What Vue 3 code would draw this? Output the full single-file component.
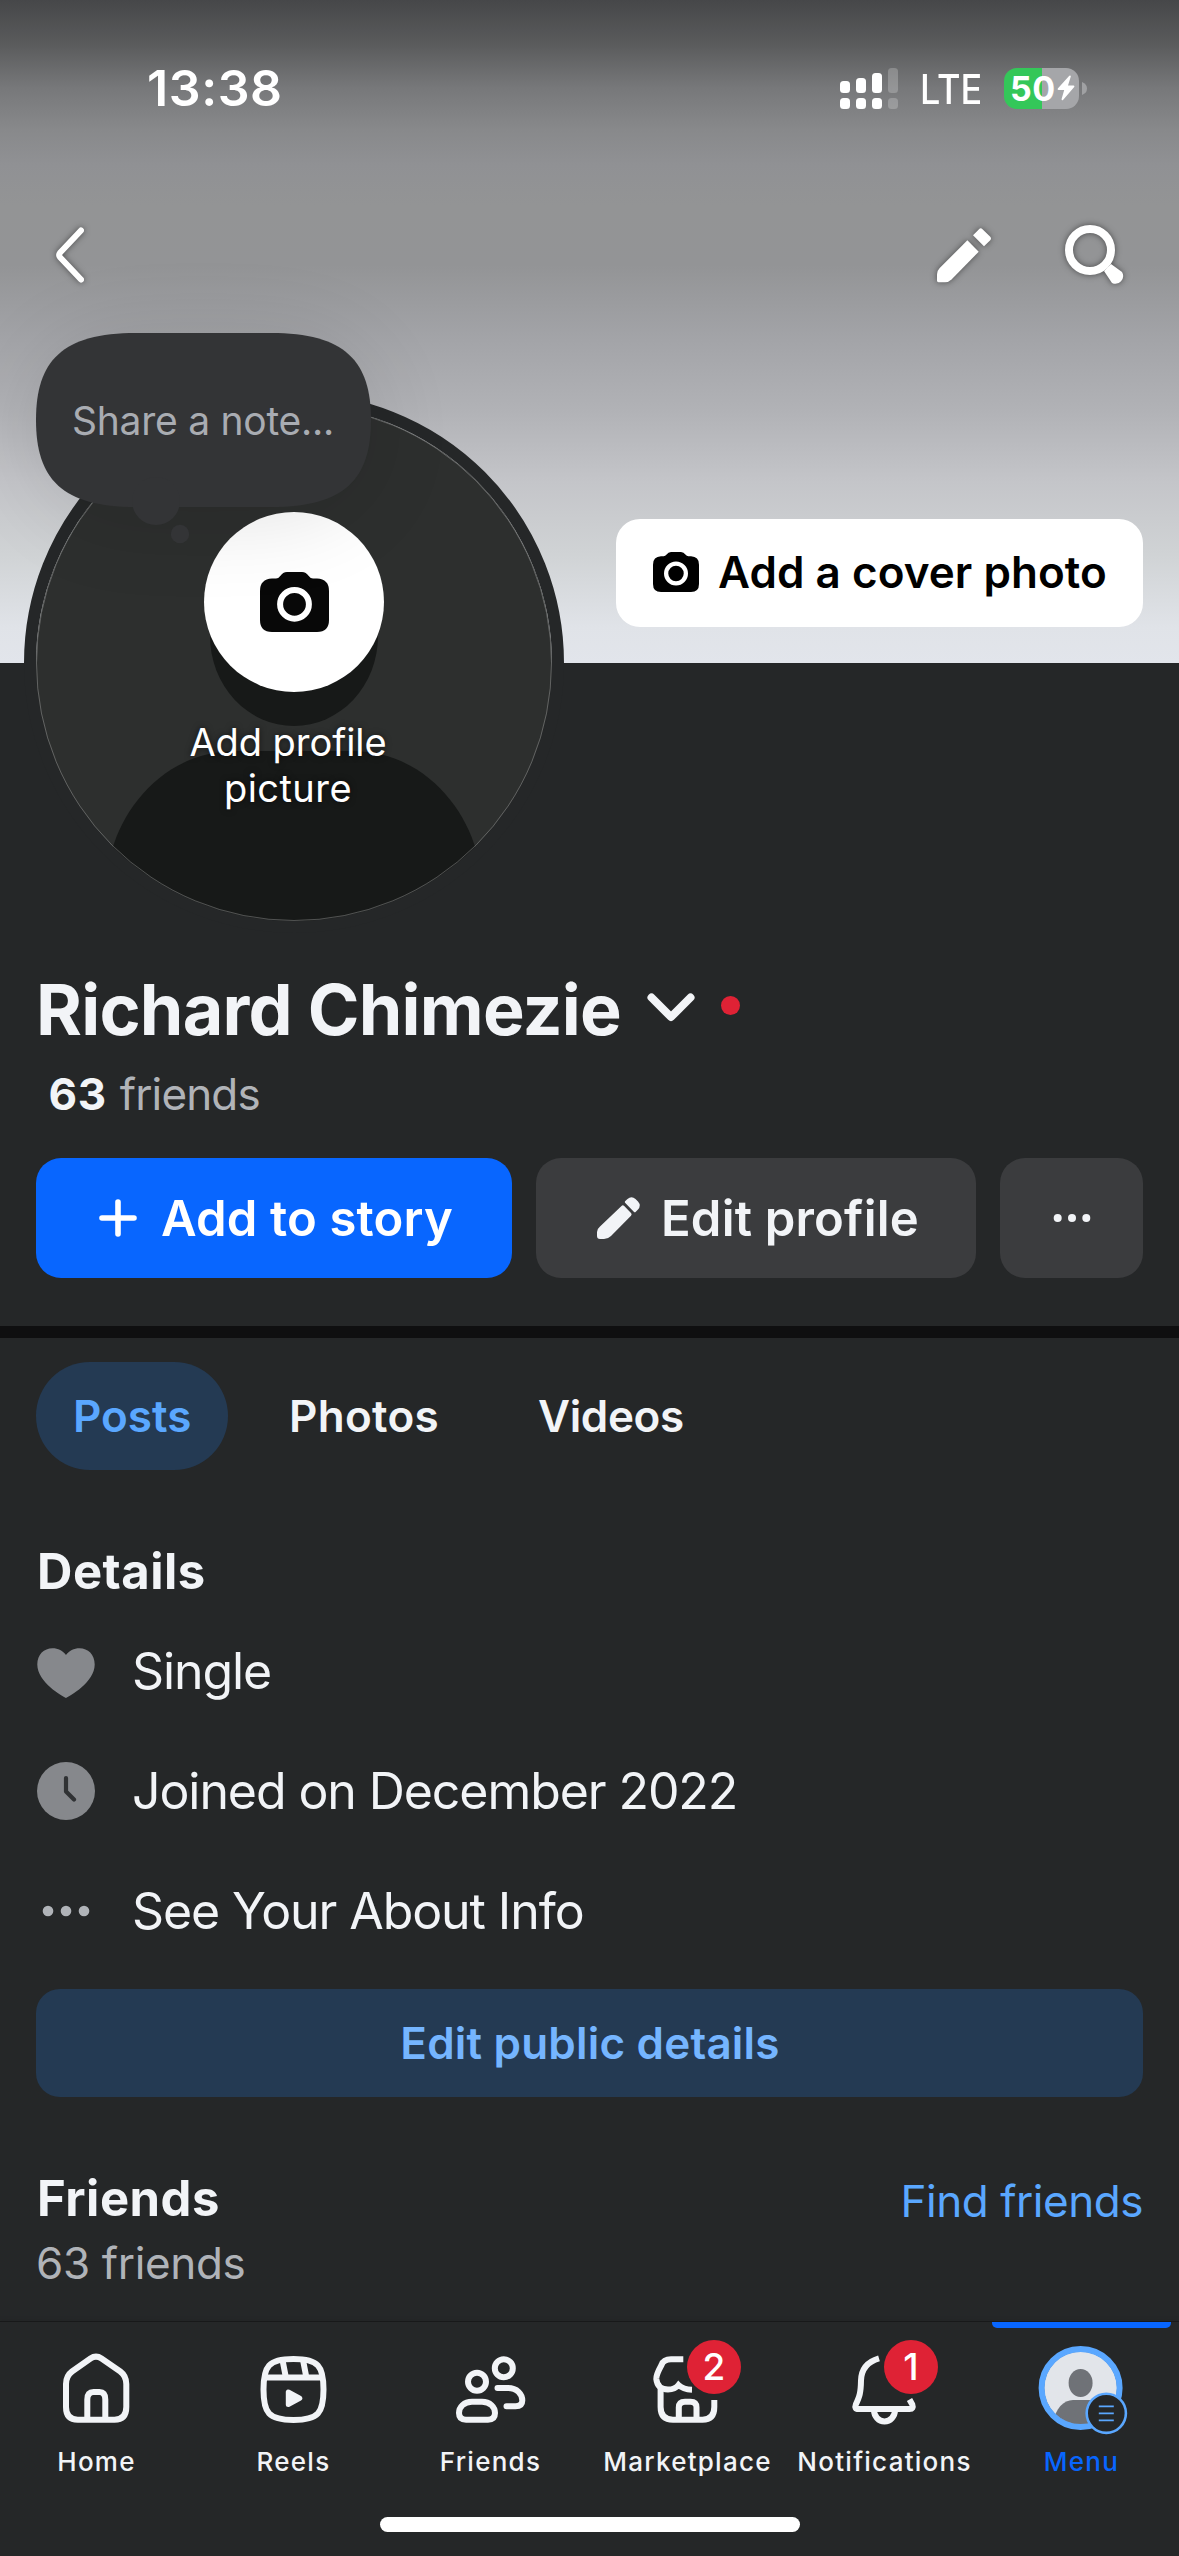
<script setup>
const signal = [
  { height: 12, dim: false },
  { height: 15, dim: false },
  { height: 20, dim: false },
  { height: 25, dim: true }
]
</script>

<template>
  <main class="screen">
    <header class="cover">
      <div class="status">
        <span class="time">13:38</span>
        <div class="signal">
          <span v-for="(bar, i) in signal" :key="i" class="signal-col" :class="{ dim: bar.dim }">
            <i :style="{ height: bar.height + 'px' }"></i>
            <i class="base"></i>
          </span>
        </div>
        <span class="network">LTE</span>
        <div class="battery">
          <span class="level">50</span>
          <svg class="bolt" width="18" height="26" viewBox="0 0 18 26">
            <path d="M12.3 .8 L.8 13.6 Q0 15 1.6 15 H7.2 L4.6 24 Q4.6 25.8 6 24.9 L17.2 12 Q18 10.6 16.6 10.5 H11 L13.8 1.6 Q13.7 0 12.3 .8Z" fill="#fff" />
          </svg>
        </div>
        <svg class="nub" width="5" height="13" viewBox="0 0 5 13"><path d="M0 0 Q5 2 5 6.5 Q5 11 0 13Z" fill="#a0a1a3" /></svg>
      </div>

      <div class="toolbar">
        <svg class="back" width="30" height="56" viewBox="0 0 30 56">
          <path d="M26 3.5 L5 25.8 Q3.3 28 5 30.2 L26 52.5" fill="none" stroke="#fff" stroke-width="6" stroke-linecap="round" stroke-linejoin="round" />
        </svg>
        <svg class="tool pencil" width="54" height="55" viewBox="0 0 54 55">
          <g fill="#fff">
            <path d="M30.4 12.3 L41.7 23.7 L14.5 51.5 Q11.7 54.3 8 54.3 H1.5 Q0 54.3 0 52.5 V46.5 Q0 42.7 2.7 40Z" />
            <path d="M36 7.3 L42 1.2 Q43.7 -.5 45.5 1.2 L53 8.5 Q55 10.7 53 12.5 L47 18.3Z" />
          </g>
        </svg>
        <svg class="tool" width="60" height="60" viewBox="0 0 60 60">
          <circle cx="25" cy="25" r="21" fill="none" stroke="#fff" stroke-width="8" />
          <path d="M46 39 L57 47 A7.8 7.8 0 0 1 47 58 L39 46Z" fill="#fff" />
        </svg>
      </div>

      <button class="cover-btn">
        <svg width="46" height="40" viewBox="0 0 69 60">
          <path d="M12 6.5 H16 Q18.5 6.5 20 4.3 Q23 0 27 0 H42 Q46 0 49 4.3 Q50.5 6.5 53 6.5 H57 Q69 7 69 19 V48 Q69 60 57 60 H12 Q0 60 0 48 V19 Q0 7 12 6.5Z" fill="#000" />
          <circle cx="34.5" cy="32.3" r="14.8" fill="none" stroke="#fff" stroke-width="6.4" />
        </svg>
        <span>Add a cover photo</span>
      </button>

      <div class="avatar">
        <svg class="person" width="516" height="516" viewBox="0 0 516 516">
          <defs>
            <clipPath id="face"><circle cx="258" cy="258" r="258" /></clipPath>
          </defs>
          <g clip-path="url(#face)">
            <rect width="516" height="516" fill="#2d2f2e" />
            <ellipse cx="258" cy="231" rx="84" ry="90" fill="#171918" />
            <path d="M76 445 C90 396 134 346 200 346 H316 C382 346 426 396 440 445 V516 H76Z" fill="#171918" />
          </g>
          <circle cx="258" cy="258" r="257.5" fill="none" stroke="#fff" stroke-opacity=".25" />
        </svg>
        <div class="camera">
          <svg width="69" height="60" viewBox="0 0 69 60">
            <path d="M12 6.5 H16 Q18.5 6.5 20 4.3 Q23 0 27 0 H42 Q46 0 49 4.3 Q50.5 6.5 53 6.5 H57 Q69 7 69 19 V48 Q69 60 57 60 H12 Q0 60 0 48 V19 Q0 7 12 6.5Z" fill="#080808" />
            <circle cx="34.5" cy="32.3" r="14.4" fill="none" stroke="#fff" stroke-width="6" />
          </svg>
        </div>
        <p class="avatar-label"><span class="l1">Add profile</span><br /><span class="l2">picture</span></p>
      </div>

      <div class="note">
        <svg class="note-shape" width="335" height="212" viewBox="0 0 335 212">
          <g fill="#333436">
            <path d="M0 87 C0 28 26 0 100 0 H235 C309 0 335 28 335 87 C335 146 309 174 235 174 H100 C26 174 0 146 0 87Z" />
            <circle cx="120" cy="168" r="24" />
            <circle cx="144" cy="201" r="9.2" />
          </g>
        </svg>
        <span class="note-text">Share a note...</span>
      </div>
    </header>

    <section class="profile">
      <div class="name-row">
        <h1>Richard Chimezie</h1>
        <svg class="chevron" width="48" height="30" viewBox="0 0 48 30">
          <path d="M4.5 4.5 L24 24 L43.5 4.5" fill="none" stroke="#f2f4f7" stroke-width="8" stroke-linecap="round" stroke-linejoin="round" />
        </svg>
        <i class="alert"></i>
      </div>
      <p class="friend-count"><b>63</b><span>friends</span></p>
      <div class="actions">
        <button class="action story">
          <svg width="38" height="38" viewBox="0 0 38 38">
            <path d="M19 3 V35 M3 19 H35" stroke="#fff" stroke-width="5.6" stroke-linecap="round" />
          </svg>
          <span>Add to story</span>
        </button>
        <button class="action edit">
          <svg width="43" height="42" viewBox="0 0 43 42">
            <g fill="#f2f4f7">
              <path d="M24.5 9 Q25.8 7.6 27.2 9 L34 16 Q35.3 17.3 34 18.7 L14 39 Q11 42 7 42 H3 Q0 42 0 39 V35 Q0 32 3 29.5Z" />
              <path d="M28.3 6 Q27.3 5 28.3 4 L30.5 2 Q34.5 -1.5 38.5 2 L41 4.5 Q44.5 8.5 41 12.5 L38.8 14.8 Q37.8 15.8 36.8 14.8Z" />
            </g>
          </svg>
          <span>Edit profile</span>
        </button>
        <button class="action more">
          <svg width="38" height="10" viewBox="0 0 38 10" fill="#f2f4f7">
            <circle cx="4.7" cy="5" r="4" /><circle cx="19" cy="5" r="4" /><circle cx="33.3" cy="5" r="4" />
          </svg>
        </button>
      </div>
    </section>

    <section class="feed">
      <nav class="tabs">
        <span class="tab active">Posts</span>
        <span class="tab photos">Photos</span>
        <span class="tab videos">Videos</span>
      </nav>

      <h2 class="details-title">Details</h2>
      <ul class="details">
        <li>
          <svg width="58" height="58" viewBox="0 0 58 58">
            <path d="M29 56 C25.5 54.5 .3 40 .3 22.5 C.3 12.5 7 6.3 15.5 6.3 C21 6.3 26 9 29 13 C32 9 37 6.3 42.5 6.3 C51 6.3 57.7 12.5 57.7 22.5 C57.7 40 32.5 54.5 29 56Z" fill="#86888c" />
          </svg>
          <span>Single</span>
        </li>
        <li>
          <svg width="58" height="58" viewBox="0 0 58 58">
            <circle cx="29" cy="29" r="29" fill="#86888c" />
            <path d="M29 16 V29.5 L37 37.5" fill="none" stroke="#303234" stroke-width="4.2" stroke-linecap="round" stroke-linejoin="round" />
          </svg>
          <span>Joined on December 2022</span>
        </li>
        <li>
          <svg width="58" height="58" viewBox="0 0 58 58" fill="#b0b3b8">
            <circle cx="11" cy="29" r="5.3" /><circle cx="29" cy="29" r="5.3" /><circle cx="47" cy="29" r="5.3" />
          </svg>
          <span>See Your About Info</span>
        </li>
      </ul>
      <button class="edit-details">Edit public details</button>

      <div class="friends-head">
        <h2>Friends</h2>
        <a>Find friends</a>
      </div>
      <p class="friends-sub">63 friends</p>
    </section>

    <footer class="bottom">
      <nav class="bar">
        <div class="item">
          <svg class="icon" viewBox="0 0 84 84">
            <path d="M12 38 Q12 30 18 25.5 L36.5 12.5 Q42 8.8 47.5 12.5 L66.3 25.5 Q72.3 30 72.3 38 V61 Q72.3 73.7 60.5 73.7 H23.8 Q12 73.7 12 61Z" />
            <path d="M33.3 73 V53.5 Q33.3 46 39.5 46 H45.5 Q51.3 46 51.3 53.5 V73" />
          </svg>
          <span>Home</span>
        </div>
        <div class="item">
          <svg class="icon" viewBox="0 0 84 84">
            <path d="M12.5 43.5 C12.5 20 17.5 13 42.5 13 C67.500 13 72.5 20 72.5 43.5 C72.5 67 67.5 74 42.5 74 C17.5 74 12.5 67 12.5 43.5Z" />
            <path d="M13 31.5 H72 M31.5 14 L34.8 31 M52 14 L55.3 31" />
            <path d="M37.3 46 V58.6 L48.8 52.3Z" fill="#f2f4f7" stroke-width="5" stroke-linejoin="round" />
          </svg>
          <span>Reels</span>
        </div>
        <div class="item">
          <svg class="icon" viewBox="0 0 84 84" stroke-linecap="round">
            <circle cx="55.8" cy="22.3" r="9" />
            <circle cx="29" cy="35.7" r="9" />
            <path d="M24 55.7 H34 C42 55.7 47 61 47 67 Q47 73.7 40 73.7 H18 Q11 73.7 11 67 C11 61 16 55.7 24 55.7Z" />
            <path d="M49.500 42 H60 C69 42 74.3 48 74.3 54.5 Q74.3 60.3 67.5 60.3 H58.5" />
          </svg>
          <span>Friends</span>
        </div>
        <div class="item">
          <div class="icon-wrap">
            <svg class="icon" viewBox="0 0 84 84">
              <path d="M38.3 13.3 H26 Q18.5 13.3 16.5 19 Q11 29 11.3 33 Q12.5 43.5 23 43.5 Q30 43.5 33.500 39 Q38 43.5 47 43.7" />
              <path d="M15.6 41 V61 Q15.6 73.7 28 73.7 H57.5 Q69.3 73.7 69.3 61 V54" />
              <path d="M33.8 73 V61.5 Q33.8 55.7 40 55.7 H45.5 Q51.5 55.7 51.5 61.5 V73" />
            </svg>
            <span class="badge">2</span>
          </div>
          <span>Marketplace</span>
        </div>
        <div class="item">
          <div class="icon-wrap">
            <svg class="icon" viewBox="0 0 84 84">
              <path d="M37 12.3 C26 15.5 19.3 23 19 34.5 C18.8 47 17.5 50.5 13.8 58.5 Q12 63 16.5 63 H67.5 Q72 63 70.3 58.5 L67.5 53.5" />
              <path d="M32 64 A10.5 11.5 0 0 0 53 64" />
            </svg>
            <span class="badge">1</span>
          </div>
          <span>Notifications</span>
        </div>
        <div class="item active">
          <svg class="icon account" viewBox="0 0 84 84">
            <defs>
              <clipPath id="me"><circle cx="41.6" cy="42" r="36.5" /></clipPath>
            </defs>
            <g clip-path="url(#me)" stroke="none">
              <rect width="84" height="84" fill="#e2e5ea" />
              <ellipse cx="41.6" cy="37" rx="12" ry="14" fill="#6f7277" />
              <path d="M14 84 V78 C16 62 25 54 34 54 H50 C59 54 68 62 70 78 V84Z" fill="#6f7277" />
            </g>
            <circle cx="41.6" cy="42" r="39" stroke="#5aa7ff" stroke-width="6" />
            <circle cx="67.3" cy="67.3" r="19.6" fill="#252728" stroke="#5aa7ff" stroke-width="2.6" />
            <path d="M59.8 60.4 H74.8 M59.8 67.4 H74.8 M59.8 74.4 H74.8" stroke="#5aa7ff" stroke-width="1.6" />
          </svg>
          <span>Menu</span>
        </div>
      </nav>
      <i class="home-indicator"></i>
    </footer>
  </main>
</template>

<style>
body {
  background: #252728;
}
</style>

<style scoped>
* {
  box-sizing: border-box;
  margin: 0;
  padding: 0;
}
.screen {
  width: 1179px;
  height: 2556px;
  display: flex;
  flex-direction: column;
  overflow: hidden;
  background: #252728;
  color: #f2f4f7;
  font-family: "Inter", "Liberation Sans", sans-serif;
}
svg {
  display: block;
  flex: none;
}
button {
  border: 0;
  font: inherit;
  color: inherit;
  display: flex;
  align-items: center;
}

/* Cover */
.cover {
  position: relative;
  flex: none;
  height: 663px;
  background: linear-gradient(
    180deg,
    #464749 0,
    #5a5b5c 44px,
    #77787a 88px,
    #88898b 130px,
    #909194 165px,
    #939495 205px,
    #939496 265px,
    #a3a4a8 340px,
    #b1b2b6 410px,
    #c4c5c9 482px,
    #d0d3d5 555px,
    #e0e3e8 627px,
    #e2e5eb 663px
  );
}
.status {
  height: 176px;
  padding: 0 92px 0 147px;
  display: flex;
  align-items: center;
}
.time {
  flex: 1;
  font-size: 50px;
  font-weight: 600;
  letter-spacing: 0.6px;
  color: #fff;
}
.signal {
  display: flex;
  gap: 6px;
  align-items: flex-end;
  height: 41px;
}
.signal-col {
  display: flex;
  flex-direction: column;
  gap: 5px;
}
.signal-col i {
  width: 10px;
  border-radius: 3.5px;
  background: #fff;
}
.signal-col .base {
  height: 11px;
}
.signal-col.dim i {
  background: rgba(255, 255, 255, 0.22);
}
.network {
  width: 57px;
  margin: 3px 27px 0 22px;
  font-size: 40.5px;
  font-weight: 500;
  color: #fff;
  transform: scaleX(0.89);
  transform-origin: left;
}
.battery {
  width: 75px;
  height: 41px;
  border-radius: 13px;
  display: flex;
  align-items: center;
  padding-left: 6px;
  background: linear-gradient(90deg, #34c759 38px, #a5a6a9 38px);
}
.level {
  width: 47px;
  font-size: 34px;
  font-weight: 700;
  letter-spacing: 0.4px;
  color: #fff;
}
.nub {
  margin-left: 3px;
}
.toolbar {
  height: 158px;
  display: flex;
  align-items: center;
  padding: 0 54px 0 55px;
}
.toolbar svg {
  overflow: visible;
  filter: drop-shadow(0 0 3px rgba(0, 0, 0, 0.5));
}
.pencil {
  margin-left: auto;
  margin-right: 74px;
}
.cover-btn {
  width: 527px;
  height: 108px;
  margin: 185px 36px 0 auto;
  padding: 0 0 2px 37px;
  gap: 19px;
  border-radius: 24px;
  background: #fff;
  color: #000;
  font-size: 44px;
  font-weight: 600;
  letter-spacing: 0.05px;
}

/* Avatar overlapping the cover edge */
.avatar {
  position: absolute;
  left: 24px;
  top: 393px;
  width: 540px;
  height: 540px;
  border-radius: 50%;
  border: 12px solid #252728;
  display: flex;
  flex-direction: column;
  align-items: center;
}
.person {
  position: absolute;
  left: 0;
  top: 0;
}
.camera {
  position: relative;
  width: 180px;
  height: 180px;
  margin-top: 107px;
  border-radius: 50%;
  background: #fff;
  display: flex;
  align-items: center;
  justify-content: center;
}
.avatar-label {
  position: relative;
  margin: 27px 12px 0 0;
  text-align: center;
  font-size: 38px;
  line-height: 46px;
  color: #fff;
  text-shadow: 0 0 6px rgba(0, 0, 0, 0.6);
}
.l1 {
  letter-spacing: -0.05px;
}
.l2 {
  letter-spacing: 0.46px;
}
.note {
  position: absolute;
  left: 36px;
  top: 333px;
  width: 335px;
  height: 174px;
  display: flex;
  align-items: center;
  padding-left: 36px;
  border-radius: 87px;
  box-shadow: 0 10px 90px rgba(0, 0, 0, 0.12);
}
.note-shape {
  position: absolute;
  left: 0;
  top: 0;
}
.note-text {
  position: relative;
  font-size: 39px;
  letter-spacing: -0.26px;
  color: #a9acb2;
}

/* Profile */
.profile {
  flex: none;
  height: 675px;
  padding: 306px 36px 0;
  border-bottom: 12px solid #0f0f10;
}
.name-row {
  height: 81px;
  display: flex;
  align-items: center;
}
h1 {
  font-size: 70px;
  font-weight: 700;
  letter-spacing: -0.76px;
  line-height: 81px;
}
.chevron {
  margin-left: 26px;
  margin-top: -4px;
}
.alert {
  width: 19px;
  height: 19px;
  margin: -9px 0 0 26px;
  border-radius: 50%;
  background: #df2235;
}
.friend-count {
  height: 60px;
  margin: 14px 0 0 12.5px;
  display: flex;
  gap: 13px;
  font-size: 44px;
  line-height: 60px;
  letter-spacing: 0.63px;
}
.friend-count span {
  color: #b0b3b8;
  letter-spacing: -0.85px;
}
.actions {
  display: flex;
  gap: 24px;
  margin-top: 34px;
}
.action {
  height: 120px;
  border-radius: 25px;
  background: #3b3c3e;
  font-size: 49px;
  font-weight: 600;
}
.story {
  width: 476px;
  padding-left: 63px;
  gap: 24px;
  background: #0866ff;
  color: #fff;
  letter-spacing: 0.16px;
}
.edit {
  width: 440px;
  padding-left: 61px;
  gap: 21px;
  letter-spacing: 0.2px;
}
.more {
  flex: 1;
  justify-content: center;
}

/* Feed */
.feed {
  flex: 1;
  padding: 24px 36px 0;
}
.tabs {
  display: flex;
  gap: 24px;
  font-size: 44px;
  font-weight: 600;
}
.tab {
  height: 108px;
  line-height: 108px;
  padding-left: 37px;
  border-radius: 54px;
}
.tab.active {
  width: 192px;
  background: #243a53;
  color: #5aa7ff;
}
.photos {
  width: 225px;
  letter-spacing: 0.3px;
}
.videos {
  letter-spacing: -0.36px;
}
h2 {
  font-size: 49px;
  font-weight: 700;
  line-height: 60px;
  letter-spacing: 0.5px;
  padding-left: 1px;
}
.details-title {
  margin-top: 72px;
}
.details {
  list-style: none;
  margin-top: 9px;
  font-size: 50px;
  letter-spacing: -1.08px;
}
.details li {
  height: 120px;
  display: flex;
  align-items: center;
  gap: 37px;
  padding-left: 1px;
}
.edit-details {
  width: 100%;
  height: 108px;
  margin-top: 18px;
  padding-left: 1px;
  justify-content: center;
  border-radius: 24px;
  background: #243a53;
  color: #75b5ff;
  font-size: 44px;
  font-weight: 600;
  letter-spacing: 0.2px;
}
.friends-head {
  display: flex;
  justify-content: space-between;
  margin-top: 72px;
}
.friends-head a {
  font-size: 44px;
  line-height: 64px;
  letter-spacing: -0.45px;
  color: #5aa7ff;
}
.friends-sub {
  font-size: 44px;
  line-height: 60px;
  letter-spacing: -0.35px;
  color: #b0b3b8;
}

/* Bottom navigation */
.bottom {
  flex: none;
  height: 235px;
  border-top: 1px solid #18191a;
  display: flex;
  flex-direction: column;
  align-items: center;
  background: #252728;
  box-shadow: 0 -1px 5px rgba(0, 0, 0, 0.08);
}
.bar {
  width: 1179px;
  display: grid;
  grid-template-columns: repeat(6, 197px);
  justify-content: end;
}
.item {
  position: relative;
  display: flex;
  flex-direction: column;
  align-items: center;
  padding-top: 24px;
  font-size: 26px;
  font-weight: 550;
  line-height: 40px;
  letter-spacing: 1.25px;
}
.item > span {
  margin: 12px 0 0 2px;
}
.item.active {
  color: #0866ff;
}
.item.active::before {
  content: "";
  position: absolute;
  left: 10px;
  right: 8px;
  top: 0;
  height: 6px;
  border-radius: 0 0 5px 5px;
  background: #0866ff;
}
.icon {
  width: 84px;
  height: 84px;
  fill: none;
  stroke: #f2f4f7;
  stroke-width: 6;
}
.account {
  overflow: visible;
}
.icon-wrap {
  position: relative;
}
.badge {
  position: absolute;
  left: 42.5px;
  top: -6px;
  width: 54px;
  height: 54px;
  border-radius: 50%;
  background: #df2235;
  color: #fff;
  text-align: center;
  font-size: 37px;
  line-height: 54px;
  letter-spacing: 0;
}
.home-indicator {
  width: 420px;
  height: 15px;
  margin-top: 35px;
  border-radius: 8px;
  background: #fff;
}
</style>
